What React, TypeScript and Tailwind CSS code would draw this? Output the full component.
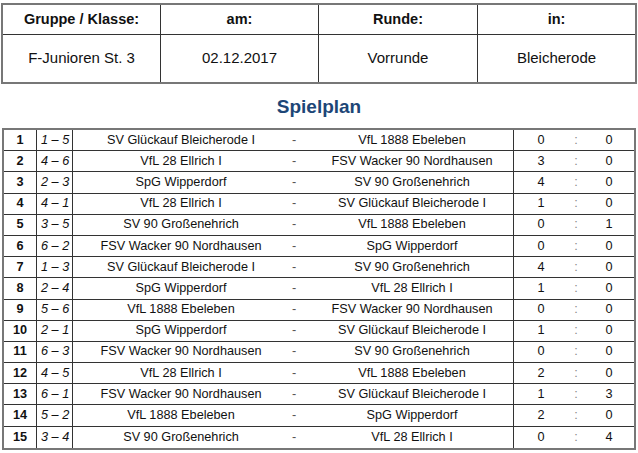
const games: [string, string, string, string, number, number][] = [
  ['1', '1 – 5', 'SV Glückauf Bleicherode I', 'VfL 1888 Ebeleben', 0, 0],
  ['2', '4 – 6', 'VfL 28 Ellrich I', 'FSV Wacker 90 Nordhausen', 3, 0],
  ['3', '2 – 3', 'SpG Wipperdorf', 'SV 90 Großenehrich', 4, 0],
  ['4', '4 – 1', 'VfL 28 Ellrich I', 'SV Glückauf Bleicherode I', 1, 0],
  ['5', '3 – 5', 'SV 90 Großenehrich', 'VfL 1888 Ebeleben', 0, 1],
  ['6', '6 – 2', 'FSV Wacker 90 Nordhausen', 'SpG Wipperdorf', 0, 0],
  ['7', '1 – 3', 'SV Glückauf Bleicherode I', 'SV 90 Großenehrich', 4, 0],
  ['8', '2 – 4', 'SpG Wipperdorf', 'VfL 28 Ellrich I', 1, 0],
  ['9', '5 – 6', 'VfL 1888 Ebeleben', 'FSV Wacker 90 Nordhausen', 0, 0],
  ['10', '2 – 1', 'SpG Wipperdorf', 'SV Glückauf Bleicherode I', 1, 0],
  ['11', '6 – 3', 'FSV Wacker 90 Nordhausen', 'SV 90 Großenehrich', 0, 0],
  ['12', '4 – 5', 'VfL 28 Ellrich I', 'VfL 1888 Ebeleben', 2, 0],
  ['13', '6 – 1', 'FSV Wacker 90 Nordhausen', 'SV Glückauf Bleicherode I', 1, 3],
  ['14', '5 – 2', 'VfL 1888 Ebeleben', 'SpG Wipperdorf', 2, 0],
  ['15', '3 – 4', 'SV 90 Großenehrich', 'VfL 28 Ellrich I', 0, 4],
]

const info = [
  { label: 'Gruppe / Klasse:', value: 'F-Junioren St. 3' },
  { label: 'am:', value: '02.12.2017' },
  { label: 'Runde:', value: 'Vorrunde' },
  { label: 'in:', value: 'Bleicherode' },
]

export default function App() {
  return (
    <div className="w-[638px] h-[453px] bg-white text-[#111] font-['Liberation_Sans',Arial,sans-serif] overflow-hidden">
      {/* Kopf: Gruppe, Datum, Runde, Ort */}
      <div className="ml-[1px] mt-[3px] w-[636px] border-2 border-[#777] grid grid-cols-[157px_158px_159px_1fr]">
        {info.map((c, i) => (
          <div key={c.label} className={`flex flex-col ${i > 0 ? 'border-l border-[#333]' : ''}`}>
            <div className="h-[30px] flex items-center justify-center font-bold text-[14.5px] border-b border-[#333]">
              {c.label}
            </div>
            <div className="h-[47px] flex items-center justify-center text-[15px]">{c.value}</div>
          </div>
        ))}
      </div>

      <h1 className="h-[44px] flex items-center justify-center text-[19px] font-bold text-[#1d4677] pt-[2px]">
        Spielplan
      </h1>

      {/* Spielplan Tabelle */}
      <div className="ml-[2px] w-[634px] border-t-2 border-b-2 border-x-2 border-[#777] text-[12.7px]">
        {games.map((g, i) => (
          <div
            key={g[0]}
            className={`h-[21.2px] grid grid-cols-[33px_36px_216px_22px_203px_54px_16px_1fr] items-center ${
              i < games.length - 1 ? 'border-b border-[#333]' : ''
            }`}
          >
            <div className="h-full flex items-center justify-center font-bold border-r border-[#333]">{g[0]}</div>
            <div className="h-full flex items-center pl-[4px] italic border-r border-[#333]">{g[1]}</div>
            <div className="text-center">{g[2]}</div>
            <div className="pl-[3px] text-[#555]">-</div>
            <div className="h-full flex items-center justify-center border-r border-[#333]">{g[3]}</div>
            <div className="text-center">{g[4]}</div>
            <div className="text-center text-[#888]">:</div>
            <div className="text-center">{g[5]}</div>
          </div>
        ))}
      </div>
    </div>
  )
}
